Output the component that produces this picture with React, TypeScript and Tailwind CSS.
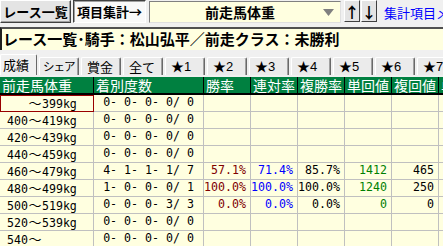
import React from "react";

const jp = { fontFamily: '"Noto Sans CJK JP", "Liberation Sans", sans-serif' };
const mono = { fontFamily: '"DejaVu Sans Mono", "Noto Sans CJK JP", monospace' };

type Row = {
  label: string;
  counts: string;
  win?: string;
  ren?: string;
  fuku?: string;
  tan?: string;
  fukuVal?: string;
};

const rows: Row[] = [
  { label: "   〜399kg", counts: "0- 0- 0- 0/ 0" },
  { label: "400〜419kg", counts: "0- 0- 0- 0/ 0" },
  { label: "420〜439kg", counts: "0- 0- 0- 0/ 0" },
  { label: "440〜459kg", counts: "0- 0- 0- 0/ 0" },
  { label: "460〜479kg", counts: "4- 1- 1- 1/ 7", win: "57.1%", ren: "71.4%", fuku: "85.7%", tan: "1412", fukuVal: "465" },
  { label: "480〜499kg", counts: "1- 0- 0- 0/ 1", win: "100.0%", ren: "100.0%", fuku: "100.0%", tan: "1240", fukuVal: "250" },
  { label: "500〜519kg", counts: "0- 0- 0- 3/ 3", win: "0.0%", ren: "0.0%", fuku: "0.0%", tan: "0", fukuVal: "0" },
  { label: "520〜539kg", counts: "0- 0- 0- 0/ 0" },
  { label: "540〜", counts: "0- 0- 0- 0/ 0" },
];

const headers = ["前走馬体重", "着別度数", "勝率", "連対率", "複勝率", "単回値", "複回値", "単"];
const tabs = ["シェア", "賞金", "全て", "★1", "★2", "★3", "★4", "★5", "★6", "★7"];

// 〜 is full width, the rest half width like the original bitmap font
function Label({ text }: { text: string }) {
  const parts = text.split("〜");
  return (
    <span className="whitespace-pre" style={mono}>
      {parts[0]}
      <span className="inline-block w-[14px] text-center text-[13px]" style={jp}>
        〜
      </span>
      {parts[1]}
    </span>
  );
}

function Cell({ value, color }: { value?: string; color: string }) {
  return (
    <div className={`h-[17px] bg-[#ffffe0] border-r border-b border-[#c0c0c0] flex items-center justify-end pr-[4px] whitespace-pre ${color}`} style={mono}>
      {value}
    </div>
  );
}

export default function App() {
  return (
    <div className="w-[443px] h-[246px] overflow-hidden bg-[#f0f0f0] text-black" style={jp}>
      {/* top bar */}
      <div className="flex items-start h-[27px] whitespace-nowrap">
        <div className="shrink-0 w-[71px] h-[23px] flex items-center justify-center bg-[#e4e4e4] border border-t-white border-l-white border-r-[#404040] border-b-[#404040] shadow-[inset_-1px_-1px_0_#a0a0a0] text-[13px] font-bold">
          レース一覧
        </div>
        <div className="shrink-0 ml-[2px] w-[73px] h-[23px] flex items-center justify-center bg-[#f9f9f9] border border-t-[#404040] border-l-[#404040] border-r-white border-b-white shadow-[inset_1px_1px_0_#a0a0a0] text-[13px] font-bold">
          項目集計→
        </div>
        <div className="shrink-0 ml-[3px] mt-[1px] w-[192px] h-[22px] flex items-center bg-[#ffffe0] border border-t-[#808080] border-l-[#808080] border-r-[#e0e0e0] border-b-[#e0e0e0]">
          <span className="pl-[55px] text-[14px] font-bold flex-1">前走馬体重</span>
          <svg width="11" height="7" viewBox="0 0 11 7" className="mr-[6px]">
            <polygon points="0,0 11,0 5.5,7" fill="#808080" />
          </svg>
        </div>
        <div className="shrink-0 ml-[3px] w-[16px] h-[22px] flex items-center justify-center bg-[#e4e4e4] border border-t-white border-l-white border-r-[#404040] border-b-[#404040] text-[15px] font-bold leading-none">
          ↑
        </div>
        <div className="shrink-0 ml-[1px] w-[16px] h-[22px] flex items-center justify-center bg-[#e4e4e4] border border-t-white border-l-white border-r-[#404040] border-b-[#404040] text-[15px] font-bold leading-none">
          ↓
        </div>
        <div className="shrink-0 ml-[7px] mt-[3px] text-[13px] text-[#0000ff]">集計項目メニュー</div>
      </div>

      {/* condition line */}
      <div className="h-[23px] bg-[#ffffe0] border-t-2 border-l-2 border-t-[#505050] border-l-[#202020] flex items-center pl-[1px] text-[15px] font-bold whitespace-nowrap">
        レース一覧･騎手：松山弘平／前走クラス：未勝利
      </div>

      {/* tabs */}
      <div className="flex items-end h-[23px] mt-[2px] whitespace-nowrap">
        <div className="w-[37px] h-[21px] mr-[2px] shrink-0 flex items-center pl-[2px] bg-[#f0f0f0] border-t border-l border-r border-t-white border-l-white border-r-[#696969] rounded-t-[2px] text-[13px]">
          成績
        </div>
        {tabs.map((t) => (
          <div
            key={t}
            className={`w-[40px] h-[18px] mr-[2px] shrink-0 flex items-center bg-[#ebebeb] border-t border-l border-r border-t-white border-l-white border-r-[#696969] shadow-[inset_-1px_0_0_#a0a0a0] rounded-t-[2px] overflow-hidden ${
              t === "シェア" ? "pl-[3px] text-[11.5px] tracking-[-1px]" : "pl-[5px] text-[13px]"
            }`}
            style={t.startsWith("★") ? { fontFamily: '"Liberation Sans", "Noto Sans CJK JP", sans-serif' } : undefined}
          >
            {t}
          </div>
        ))}
      </div>

      {/* table */}
      <div className="mt-[2px] grid grid-cols-[94px_110px_47px_47px_47px_47px_47px_60px] text-[11.6px] leading-none">
        {headers.map((h) => (
          <div key={h} className="h-[18px] bg-[#008040] text-white text-[14px] border-r border-b-2 border-black flex items-center pl-[2px] whitespace-nowrap overflow-hidden">
            {h}
          </div>
        ))}
        {rows.map((r, i) => (
          <React.Fragment key={r.label}>
            <div
              className={`h-[17px] flex items-center bg-[#ffffe0] ${
                i === 0 ? "border border-[#990000] pl-[6px]" : "border-r border-b border-[#c0c0c0] pl-[7px]"
              }`}
            >
              <Label text={r.label} />
            </div>
            <div className="h-[17px] bg-[#ffffe0] border-r border-b border-[#c0c0c0] flex items-center justify-center whitespace-pre" style={mono}>
              {r.counts}
            </div>
            <Cell value={r.win} color="text-[#800000]" />
            <Cell value={r.ren} color="text-[#0000ff]" />
            <Cell value={r.fuku} color="text-black" />
            <Cell value={r.tan} color="text-[#008000]" />
            <Cell value={r.fukuVal} color="text-black" />
            <Cell value="" color="text-black" />
          </React.Fragment>
        ))}
      </div>
    </div>
  );
}
